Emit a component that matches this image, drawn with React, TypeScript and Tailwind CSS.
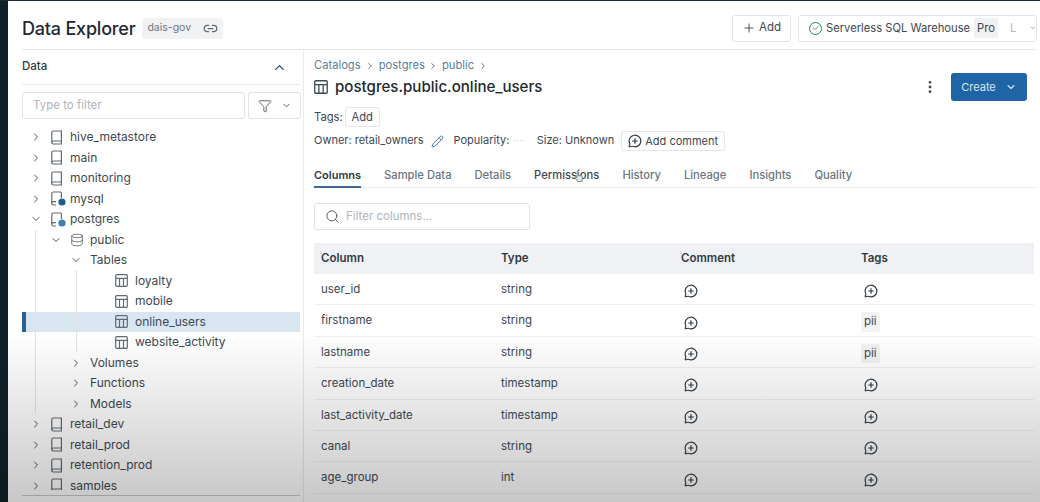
import {
  Check,
  ChevronDown,
  ChevronRight,
  ChevronUp,
  Database,
  EllipsisVertical,
  Funnel,
  Link2,
  MessageCirclePlus,
  Pencil,
  Plus,
  Search,
} from "lucide-react";

const font = "font-['Inter','Noto_Sans',sans-serif]";

const BookIcon = () => (
  <svg width="12" height="15" viewBox="0 0 12 15" fill="none" stroke="#5f6b75" strokeWidth="1.2" className="shrink-0">
    <path d="M2.2 1h8.2v13H2.2A1.4 1.4 0 0 1 .8 12.6V2.4A1.4 1.4 0 0 1 2.2 1Z" />
    <path d="M.8 12.4A1.4 1.4 0 0 1 2.2 11h8.2" />
  </svg>
);

const ForeignIcon = ({ dot }: { dot: string }) => (
  <svg width="15" height="15" viewBox="0 0 15 15" fill="none" className="shrink-0 -mr-[3px]">
    <path d="M5 14H2.2A1.4 1.4 0 0 1 .8 12.6V2.4A1.4 1.4 0 0 1 2.2 1h7.2a1 1 0 0 1 1 1v5" stroke="#5f6b75" strokeWidth="1.2" />
    <path d="M.8 11.8A1.4 1.4 0 0 1 2.2 10.6H5" stroke="#5f6b75" strokeWidth="1.2" />
    <circle cx="11" cy="11" r="3.6" fill={dot} />
  </svg>
);

const TableIcon = ({ size = 13, color = "#5f6b75" }: { size?: number; color?: string }) => (
  <svg width={size} height={size} viewBox="0 0 13 13" fill="none" stroke={color} strokeWidth="1.2" className="shrink-0">
    <rect x="0.7" y="0.7" width="11.6" height="11.6" rx="1" />
    <path d="M.7 4.3h11.6M4.5 4.3v8M8.5 4.3v8" />
  </svg>
);

type TreeRow = {
  label: string;
  level: 0 | 1 | 2 | 3;
  open?: boolean;
  icon?: "book" | "mysql" | "postgres" | "db" | "table";
  selected?: boolean;
};

const tree: TreeRow[] = [
  { label: "hive_metastore", level: 0, icon: "book" },
  { label: "main", level: 0, icon: "book" },
  { label: "monitoring", level: 0, icon: "book" },
  { label: "mysql", level: 0, icon: "mysql" },
  { label: "postgres", level: 0, icon: "postgres", open: true },
  { label: "public", level: 1, icon: "db", open: true },
  { label: "Tables", level: 2, open: true },
  { label: "loyalty", level: 3, icon: "table" },
  { label: "mobile", level: 3, icon: "table" },
  { label: "online_users", level: 3, icon: "table", selected: true },
  { label: "website_activity", level: 3, icon: "table" },
  { label: "Volumes", level: 2 },
  { label: "Functions", level: 2 },
  { label: "Models", level: 2 },
  { label: "retail_dev", level: 0, icon: "book" },
  { label: "retail_prod", level: 0, icon: "book" },
  { label: "retention_prod", level: 0, icon: "book" },
  { label: "samples", level: 0, icon: "book" },
];

const columns: { name: string; type: string; pii?: boolean }[] = [
  { name: "user_id", type: "string" },
  { name: "firstname", type: "string", pii: true },
  { name: "lastname", type: "string", pii: true },
  { name: "creation_date", type: "timestamp" },
  { name: "last_activity_date", type: "timestamp" },
  { name: "canal", type: "string" },
  { name: "age_group", type: "int" },
];

const tabs = ["Columns", "Sample Data", "Details", "Permissions", "History", "Lineage", "Insights", "Quality"];

const RowIcon = ({ icon }: { icon: TreeRow["icon"] }) => {
  if (icon === "book") return <BookIcon />;
  if (icon === "mysql") return <ForeignIcon dot="#1f5f8b" />;
  if (icon === "postgres") return <ForeignIcon dot="#3f7fb0" />;
  if (icon === "db") return <Database size={14} color="#5f6b75" strokeWidth={1.5} className="shrink-0" />;
  return <TableIcon />;
};

const Row = ({ row }: { row: TreeRow }) => {
  const Chevron = row.open ? ChevronDown : ChevronRight;
  const chevron = <Chevron size={12} color="#4b5660" strokeWidth={2} className="shrink-0" />;

  if (row.level === 3) {
    return (
      <div
        className={
          row.selected
            ? "flex h-[20.5px] items-center border-l-[4px] border-[#2a6099] bg-[#d8e6f0] pl-[89px]"
            : "flex h-[20.5px] items-center pl-[93px]"
        }
      >
        <RowIcon icon={row.icon} />
        <span className="ml-[7px] text-[12px] text-[#3d4852]">{row.label}</span>
      </div>
    );
  }
  if (row.level === 2) {
    return (
      <div className="flex h-[20.5px] items-center pl-[48px]">
        {chevron}
        <span className="ml-[8px] text-[12px] text-[#3d4852]">{row.label}</span>
      </div>
    );
  }
  if (row.level === 1) {
    return (
      <div className="flex h-[20.5px] items-center pl-[28px]">
        {chevron}
        <span className="ml-[8px] flex w-[14px]">
          <RowIcon icon={row.icon} />
        </span>
        <span className="ml-[6px] text-[12px] text-[#3d4852]">{row.label}</span>
      </div>
    );
  }
  return (
    <div className="flex h-[20.5px] items-center pl-[8px]">
      {chevron}
      <span className="ml-[9px] flex w-[12px]">
        <RowIcon icon={row.icon} />
      </span>
      <span className="ml-[7px] text-[12px] text-[#3d4852]">{row.label}</span>
    </div>
  );
};

const CommentIcon = () => <MessageCirclePlus size={14} color="#2f3a43" strokeWidth={2} />;

export default function App() {
  return (
    <div className={`relative flex h-[502px] w-[1040px] flex-col overflow-hidden bg-white ${font}`}>
      <div className="h-[1px] bg-[#1d2b33]" />
      <div className="flex min-h-0 flex-1">
        <div className="w-2 shrink-0 bg-[#0f2229]" />
        <div className="ml-[14px] flex w-[1015px] flex-col">
          {/* header */}
          <div className="flex h-[49px] shrink-0 items-center justify-between border-b border-[#e4e6e8] pt-[6px]">
            <div className="flex items-center">
              <h1 className="text-[18px] font-medium tracking-[-0.2px] text-[#22292f]">Data Explorer</h1>
              <div className="ml-[7px] flex h-[21px] items-center rounded-[4px] bg-[#f1f2f4] px-[5px] text-[10.5px] text-[#6b7680]">
                <span>dais-gov</span>
                <Link2 size={15} color="#5f6b75" className="ml-[12px]" />
              </div>
            </div>
            <div className="flex items-center gap-[7px]">
              <button className="flex h-[27px] w-[59px] items-center justify-center gap-[3px] rounded-[3px] border border-[#e2e4e7] text-[11.5px] text-[#3d4852]">
                <Plus size={14} strokeWidth={1.6} />
                Add
              </button>
              <button className="flex h-[27px] w-[239px] items-center whitespace-nowrap rounded-[3px] border border-[#e2e4e7] pl-[10px] text-[11.2px] text-[#3d4852]">
                <span className="flex h-[13px] w-[13px] shrink-0 items-center justify-center rounded-full border border-[#2f7d5c]">
                  <Check size={8} color="#2f7d5c" strokeWidth={2.5} />
                </span>
                <span className="ml-[4px]">Serverless SQL Warehouse</span>
                <span className="ml-[4px] rounded-[2px] bg-[#f0f1f2] px-[3px] py-[2px]">Pro</span>
                <span className="ml-[12px] text-[#b4babf]">L</span>
                <ChevronDown size={12} strokeWidth={2} className="ml-[14px]" />
              </button>
            </div>
          </div>

          <div className="flex min-h-0 flex-1">
            {/* left panel */}
            <div className="flex w-[282px] shrink-0 flex-col border-r border-[#e8eaec]">
              <div className="mr-[3px] flex h-[35px] shrink-0 items-center justify-between border-b border-[#e8eaec]">
                <span className="text-[11.5px] font-medium text-[#2f3a43]">Data</span>
                <ChevronUp size={15} color="#2f4a60" strokeWidth={2.2} className="mr-[13px]" />
              </div>
              <div className="mt-[7px] flex shrink-0 gap-[3px]">
                <div className="flex h-[27px] w-[223px] items-center rounded-[3px] border border-[#e0e2e5] pl-[10px] text-[11.5px] text-[#b0b5ba]">
                  Type to filter
                </div>
                <div className="flex h-[27px] w-[53px] items-center justify-center gap-[9px] rounded-[3px] border border-[#e0e2e5]">
                  <Funnel size={14} color="#4b5660" strokeWidth={1.5} />
                  <ChevronDown size={11} color="#4b5660" strokeWidth={2} />
                </div>
              </div>
              <div className="relative mr-[3px] mt-[8px] min-h-0 flex-1 overflow-hidden">
                {tree.map((row) => (
                  <Row key={row.label} row={row} />
                ))}
                {/* tree guides */}
                <div className="absolute left-[13px] top-[103px] h-[183px] w-px bg-[#e0e2e4]" />
                <div className="absolute left-[54px] top-[143px] h-[82px] w-px bg-[#e0e2e4]" />
              </div>
              <div className="mr-[3px] mt-[5px] h-[7px] shrink-0 border-t border-[#c9cacc]" />
            </div>

            {/* right panel */}
            <div className="ml-[10px] flex min-w-0 flex-1 flex-col">
              <div className="mt-[8px] flex h-[15px] shrink-0 items-center text-[11.2px] text-[#5a7f9c]">
                <span>Catalogs</span>
                <ChevronRight size={10} color="#4b5660" strokeWidth={2} className="mx-[4px]" />
                <span>postgres</span>
                <ChevronRight size={10} color="#4b5660" strokeWidth={2} className="mx-[3.5px]" />
                <span>public</span>
                <ChevronRight size={10} color="#4b5660" strokeWidth={2} className="mx-[4px]" />
              </div>
              <div className="flex h-[28px] shrink-0 items-center pr-[10px]">
                <TableIcon size={14} color="#3d4852" />
                <span className="ml-[7px] text-[15.1px] font-medium text-[#22292f]">postgres.public.online_users</span>
                <EllipsisVertical size={16} color="#3d4852" strokeWidth={2.2} className="ml-auto mr-[13px]" />
                <button className="flex h-[28px] w-[76px] items-center justify-center gap-[9px] rounded-[3px] bg-[#1f65a6] text-[11px] text-[#dbe7f2]">
                  Create
                  <ChevronDown size={12} strokeWidth={2.2} />
                </button>
              </div>
              <div className="mt-[6px] flex h-[20px] shrink-0 items-center text-[11.2px] text-[#3d4852]">
                <span>Tags:</span>
                <span className="ml-[2px] flex h-[20px] w-[35px] items-center justify-center rounded-[3px] border border-[#e4e6e8]">
                  Add
                </span>
              </div>
              <div className="mt-[4px] flex h-[20px] shrink-0 items-center text-[11px] text-[#3d4852]">
                <span className="mb-[2px]">Owner: retail_owners</span>
                <Pencil size={13} color="#3f74a3" strokeWidth={1.8} className="ml-[7px]" />
                <span className="mb-[2px] ml-[10px]">Popularity:</span>
                <span className="ml-[4px] text-[9px] tracking-[0.5px] text-[#c4c8cc]">····</span>
                <span className="mb-[2px] ml-[11px]">Size: Unknown</span>
                <span className="ml-[7px] flex h-[20px] w-[104px] items-center justify-center gap-[3px] rounded-[3px] border border-[#e4e6e8]">
                  <CommentIcon />
                  Add comment
                </span>
              </div>
              <div className="mt-[14px] flex h-[23px] shrink-0 gap-[23px] border-b border-[#eceef0] pr-[9px] pt-[2px] text-[11.2px] font-medium text-[#6b7680]">
                {tabs.map((tab) => (
                  <span
                    key={tab}
                    className={
                      tab === "Columns"
                        ? "-mb-px h-[21px] border-b-2 border-[#3a6a94] text-[11px] font-semibold text-[#2f3a43]"
                        : tab === "Permissions"
                          ? "text-[#3d4852]"
                          : ""
                    }
                  >
                    {tab}
                  </span>
                ))}
              </div>
              <div className="mt-[15px] flex h-[27px] w-[216px] shrink-0 items-center rounded-[3px] border border-[#e0e2e5] pl-[10px] text-[11.5px] text-[#b0b5ba]">
                <Search size={15} color="#4b5660" strokeWidth={1.5} />
                <span className="ml-[6px]">Filter columns...</span>
              </div>
              <div className="mt-[13px] grid h-[31px] w-[720px] shrink-0 grid-cols-[180px_180px_180px_180px] items-center bg-[#eff1f4] pl-[7px] text-[11.5px] font-semibold text-[#2f3a43]">
                <span>Column</span>
                <span>Type</span>
                <span>Comment</span>
                <span>Tags</span>
              </div>
              {columns.map((col) => (
                <div
                  key={col.name}
                  className="grid h-[31.4px] w-[720px] shrink-0 grid-cols-[180px_180px_180px_180px] items-center border-b border-[#eef0f1] pl-[7px] text-[11.5px] text-[#3d4852]"
                >
                  <span className="mt-[1px]">{col.name}</span>
                  <span className="mt-[1px]">{col.type}</span>
                  <span className="ml-[3px] mt-[4px]">
                    <CommentIcon />
                  </span>
                  {col.pii ? (
                    <span className="mt-[3px] w-fit rounded-[2px] bg-[#f1f2f3] px-[3px] py-[1px]">pii</span>
                  ) : (
                    <span className="ml-[3px] mt-[4px]">
                      <CommentIcon />
                    </span>
                  )}
                </div>
              ))}
            </div>
          </div>
        </div>
      </div>

      {/* pointer over the Permissions tab */}
      <svg width="10" height="13" viewBox="0 0 10 13" className="absolute left-[574px] top-[170px]">
        <path d="M3 1.5c.8-.6 1.4 0 1.4.8v3l3.2.8c.8.3 1 .8.9 1.6L8 11.5H3.6L1 7.6c-.3-.8.6-1.2 1.2-.7l.8.8V1.5Z" fill="#e3e5e7" stroke="#6b7680" strokeWidth="0.8" />
      </svg>

      {/* video fade along the bottom */}
      <div className="pointer-events-none absolute inset-x-0 bottom-0 h-[170px] bg-gradient-to-b from-transparent to-[#00000038]" />
    </div>
  );
}
